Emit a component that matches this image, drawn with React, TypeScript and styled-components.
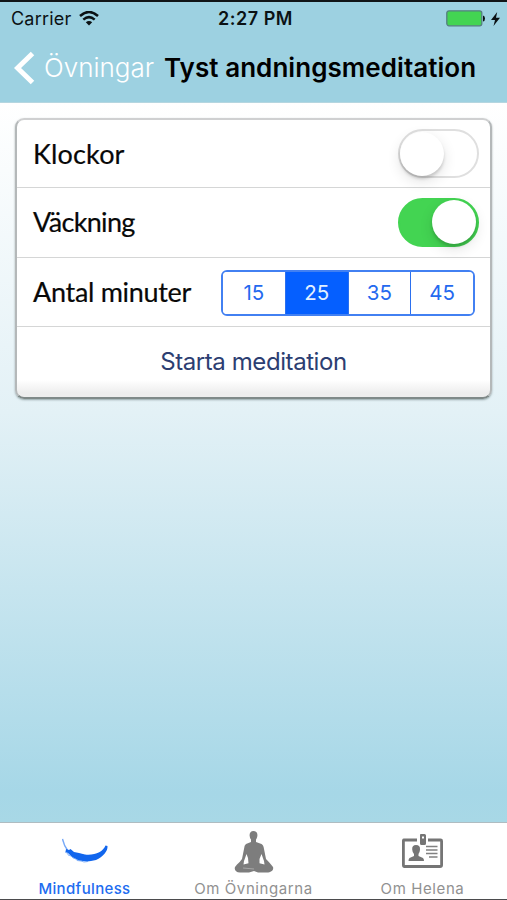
import React, { useState } from "react";
import styled, { createGlobalStyle } from "styled-components";

const Global = createGlobalStyle`
  * { box-sizing: border-box; }
  body { margin: 0; font-family: Inter, "Liberation Sans", sans-serif; }
  button { font-family: inherit; margin: 0; padding: 0; border: 0; background: none; }
`;

const Screen = styled.div`
  width: 507px;
  height: 900px;
  display: flex;
  flex-direction: column;
  overflow: hidden;
  border-top: 2px solid #101517;
  border-bottom: 1px solid #4b4b4d;
  background: #fff;
`;

const Header = styled.header`
  height: 101px;
  flex: none;
  background: #9dd1e1;
  border-bottom: 1px solid #b5d6e0;
`;

const StatusBar = styled.div`
  height: 33px;
  display: grid;
  grid-template-columns: 1fr auto 1fr;
  align-items: center;
  padding: 0 7px 0 11px;
  color: #0b1114;
`;

const StatusGroup = styled.div<{ $end?: boolean }>`
  display: flex;
  align-items: center;
  gap: ${(p) => (p.$end ? 6 : 8)}px;
  justify-content: ${(p) => (p.$end ? "flex-end" : "flex-start")};
`;

const Text = styled.span<{ $size: number; $weight?: number; $spacing?: number }>`
  font-size: ${(p) => p.$size}px;
  font-weight: ${(p) => p.$weight ?? 400};
  letter-spacing: ${(p) => p.$spacing ?? 0}px;
  line-height: 1.2;
  white-space: nowrap;
`;

const NavBar = styled.nav`
  height: 66px;
  display: flex;
  align-items: center;
  padding-left: 14px;
`;

const BackButton = styled.button`
  display: flex;
  align-items: center;
  gap: 9px;
  width: 150px;
  color: #fff;
`;

const Main = styled.main`
  flex: 1;
  padding: 15px 15px;
  background: linear-gradient(#ffffff 0%, #e3f1f6 43%, #a6d7e7 96%, #a8d8e6 100%);
`;

const Card = styled.section`
  height: 281px;
  border: 2px solid;
  border-color: #cfd0d1 #b4b8b9 #7f8988 #b4b8b9;
  border-radius: 9px;
  background: linear-gradient(#fff 0, #fff 260px, #ededed 273px);
  box-shadow: 0 1px 2px rgba(70, 90, 90, 0.5);
`;

const Row = styled.div`
  height: 69.6px;
  display: flex;
  align-items: center;
  justify-content: space-between;
  padding: 0 11px 0 16px;
  border-bottom: 1px solid #d5d6d6;
  &:first-child { height: 68px; }
`;

const RowLabel = styled.span<{ $spacing?: number }>`
  font-family: Lato, sans-serif;
  font-size: 27px;
  line-height: 32px;
  letter-spacing: ${(p) => p.$spacing ?? 0}px;
  color: #080808;
  white-space: nowrap;
  -webkit-text-stroke: 0.2px #080808;
`;

const Track = styled.button<{ $on: boolean }>`
  width: 81px;
  height: 49px;
  display: flex;
  align-items: center;
  justify-content: ${(p) => (p.$on ? "flex-end" : "flex-start")};
  padding: 0 ${(p) => (p.$on ? 1 : 0)}px;
  border-radius: 25px;
  border: 2px solid ${(p) => (p.$on ? "#43d452" : "#dfdfdf")};
  background: ${(p) => (p.$on ? "#43d452" : "#fff")};
`;

const Knob = styled.span`
  width: 44px;
  height: 44px;
  border-radius: 50%;
  background: #fff;
  box-shadow: 0 3px 3px rgba(0, 0, 0, 0.15), 0 5px 14px rgba(0, 0, 0, 0.12);
`;

const Segments = styled.div`
  width: 254px;
  height: 46px;
  display: flex;
  margin: 2px 4px 0 0;
  border: 2px solid #4280f2;
  border-radius: 6px;
  overflow: hidden;
`;

const Segment = styled.button<{ $active: boolean }>`
  flex: 1;
  font-size: 20.5px;
  color: ${(p) => (p.$active ? "#e3f0ff" : "#2469ef")};
  background: ${(p) => (p.$active ? "#055fff" : "#fff")};
  & + & { border-left: 1.5px solid #2b70ef; }
`;

const StartButton = styled.button`
  display: block;
  width: 100%;
  height: 71px;
  color: #2c3e72;
`;

const TabBar = styled.footer`
  height: 77px;
  flex: none;
  display: grid;
  grid-template-columns: repeat(3, 1fr);
  border-top: 1px solid #afbcc1;
  padding-bottom: 1px;
  background: #fff;
`;

const Tab = styled.button<{ $active?: boolean }>`
  display: flex;
  flex-direction: column;
  align-items: center;
  justify-content: flex-end;
  gap: 5px;
  color: ${(p) => (p.$active ? "#216cf0" : "#919191")};
`;

const Wifi = () => (
  <svg width="20" height="15" viewBox="0 0 20 15" fill="none" stroke="#0b1114" strokeWidth="2.5">
    <path d="M1 5Q10-3 19 5M4.3 8.6Q10 3.7 15.7 8.6" />
    <path d="M10 14.5 6.8 11.3Q10 8.8 13.2 11.3Z" fill="#0b1114" stroke="none" />
  </svg>
);

const Battery = () => (
  <svg width="39" height="17" viewBox="0 0 39 17">
    <rect x=".8" y=".8" width="35" height="15" rx="2.2" fill="#43d452" stroke="#557e80" strokeWidth="1.3" />
    <path d="M37 5.5Q39 6 39 8.5T37 11.5Z" fill="#0b1114" />
  </svg>
);

const Bolt = () => (
  <svg width="9" height="14" viewBox="0 0 9 14">
    <path d="M6.2 0 0 8H4L2.5 14 9 5.8H5Z" fill="#0b1114" />
  </svg>
);

const Chevron = () => (
  <svg width="21" height="34" viewBox="0 0 21 34">
    <path d="M18.5 2.5 3.5 17 18.5 31.5" fill="none" stroke="#fff" strokeWidth="5" />
  </svg>
);

const Feather = () => (
  <svg width="46" height="44" viewBox="0 0 46 44">
    <path d="M.5 8Q2 15 6 20" fill="none" stroke="#79aaf7" strokeWidth="1.4" />
    <path d="M4 18 7 19 8.5 18 12 21 17 22 23 23.5C33 24.5 41 21 43.5 14.5L45.5 15C46 20 41 26 34 29L29 30 25 30.5 21 30 17 29.5 14 28 11 26.5 8 24 6 22 3.5 21Z" fill="#1266ed" />
    <path d="M3 21 6 22.5 6 24 9 25 11 27 14 28 15 29.5 19 30 22 31 26 30.5" fill="none" stroke="#5c99f6" strokeWidth=".7" />
  </svg>
);

const Lotus = () => (
  <svg width="40" height="44" viewBox="0 0 40 44" fill="#7d7d7d">
    <path fillRule="evenodd" d="M19.5 0C22.3 0 23.6 1.8 23.4 4.4C23.2 6.8 22.5 7.5 22 8.5V11L27.5 13Q29.5 14 30 18L32 28Q35 31 37 33.5L39 36C40 39 37 41.5 33 41.5H24L20 40 15 41.5H6C2 41.5 0 39 1 36L3 33.5Q6 31 8 28L10 18Q10.3 14 12 13L17 11V8.5Q15.7 7 15.6 4.4C15.5 1.8 16.7 0 19.5 0ZM12.5 23 10 30 9.5 33.5 14.5 32.2 14 27ZM27.5 23 25.5 28 25.5 32.2 30.5 33.5 30 30Z" />
    <path d="m9 37 11 1" stroke="#b0b0b0" strokeWidth=".8" />
  </svg>
);

const IdCard = () => (
  <svg width="41" height="44" viewBox="0 0 41 44" fill="#757575">
    <path d="M15 9H1.8Q1.4 9 1.4 10V34Q1.4 35.5 2.5 35.5H38Q39.6 35.5 39.6 34V10Q39.6 9 38.5 9H26" fill="none" stroke="#757575" strokeWidth="2.8" />
    <path fillRule="evenodd" d="M18.5 3H22.5Q24 3 24 4.5V12.5Q24 14 22.5 14H19.5Q18 14 18 12.5V4.5Q18 3 18.5 3ZM20 5.5V7.5H22V5.5Z" />
    <path d="M14 14C17 14 18.3 15.7 18 18.5C17.8 21.2 16.9 22 16.5 23V25L21 27Q22 27.8 22 30H6.5Q6.5 27.8 7.5 27L12 25V23Q10.4 21.5 10.2 18.5C10 15.7 11.2 14 14 14Z" />
    <path d="M24 15.5H35.5M24 19H35.5M24 22.5H35.5M27 26H35.5" stroke="#818181" strokeWidth="1.7" />
  </svg>
);

function Switch({ initial, label }: { initial: boolean; label: string }) {
  const [on, setOn] = useState(initial);
  return (
    <Track $on={on} role="switch" aria-checked={on} aria-label={label} onClick={() => setOn(!on)}>
      <Knob />
    </Track>
  );
}

export default function App() {
  const [minutes, setMinutes] = useState(25);
  return (
    <>
      <Global />
      <Screen>
        <Header>
          <StatusBar>
            <StatusGroup>
              <Text $size={18} $spacing={0.2}>Carrier</Text>
              <Wifi />
            </StatusGroup>
            <Text $size={18} $weight={600} $spacing={0.5}>2:27 PM</Text>
            <StatusGroup $end>
              <Battery />
              <Bolt />
            </StatusGroup>
          </StatusBar>
          <NavBar>
            <BackButton>
              <Chevron />
              <Text $size={26} $weight={300}>Övningar</Text>
            </BackButton>
            <Text $size={26} $weight={600} $spacing={0.06}>Tyst andningsmeditation</Text>
          </NavBar>
        </Header>
        <Main>
          <Card>
            <Row>
              <RowLabel $spacing={0.15}>Klockor</RowLabel>
              <Switch initial={false} label="Klockor" />
            </Row>
            <Row>
              <RowLabel $spacing={-0.7}>Väckning</RowLabel>
              <Switch initial label="Väckning" />
            </Row>
            <Row>
              <RowLabel $spacing={-0.3}>Antal minuter</RowLabel>
              <Segments>
                {[15, 25, 35, 45].map((n) => (
                  <Segment key={n} $active={n === minutes} onClick={() => setMinutes(n)}>{n}</Segment>
                ))}
              </Segments>
            </Row>
            <StartButton>
              <Text $size={24} $spacing={-0.42}>Starta meditation</Text>
            </StartButton>
          </Card>
        </Main>
        <TabBar>
          <Tab $active>
            <Feather />
            <Text $size={15} $weight={500} $spacing={0.35}>Mindfulness</Text>
          </Tab>
          <Tab>
            <Lotus />
            <Text $size={15} $spacing={0.6}>Om Övningarna</Text>
          </Tab>
          <Tab>
            <IdCard />
            <Text $size={15} $spacing={0.6}>Om Helena</Text>
          </Tab>
        </TabBar>
      </Screen>
    </>
  );
}
